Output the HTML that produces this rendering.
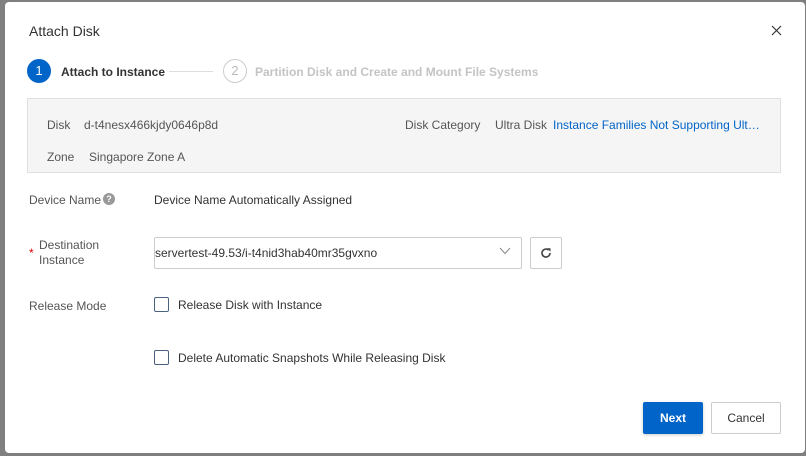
<!DOCTYPE html>
<html><head><style>
*{box-sizing:border-box;margin:0;padding:0}
body{width:806px;height:456px;background:#7f7f7f;font-family:"Liberation Sans",sans-serif;font-size:12px;color:#333;position:relative;overflow:hidden}
.bgl{position:absolute;left:0;top:0;width:6px;height:456px;background:#808080}
.dlg{position:absolute;left:5px;top:2px;width:800px;height:451px;background:#fff;border-radius:4px}
.a{position:absolute;white-space:nowrap}
.lbl{color:#555}
</style></head><body>
<div class="bgl"></div>
<div class="dlg">
<div class="a" style="left:24px;top:21px;font-size:14px;color:#333">Attach Disk</div>
<svg class="a" style="left:766px;top:23px" width="11" height="11" viewBox="0 0 11 11"><path d="M1 1L10 10M10 1L1 10" stroke="#333" stroke-width="1.2" fill="none"/></svg>
<div class="a" style="left:22px;top:57px;width:24px;height:24px;border-radius:50%;background:#0064c8;color:#fff;text-align:center;line-height:24px;font-size:13px">1</div>
<div class="a" style="left:56px;top:63px;font-weight:bold;font-size:12px;color:#333">Attach to Instance</div>
<div class="a" style="left:164px;top:69px;width:44px;height:1px;background:#ddd"></div>
<div class="a" style="left:218px;top:57px;width:24px;height:24px;border-radius:50%;border:1px solid #ccc;color:#bbb;text-align:center;line-height:22px;font-size:13px">2</div>
<div class="a" style="left:250px;top:63px;font-weight:bold;color:#c4c4c4">Partition Disk and Create and Mount File Systems</div>
<div class="a" style="left:22px;top:96px;width:754px;height:75px;background:#f5f5f5;border:1px solid #e0e0e0"></div>
<div class="a lbl" style="left:42px;top:116px">Disk</div>
<div class="a" style="left:79px;top:116px;color:#555">d-t4nesx466kjdy0646p8d</div>
<div class="a lbl" style="left:400px;top:116px">Disk Category</div>
<div class="a" style="left:490px;top:116px;color:#555">Ultra Disk</div>
<div class="a" style="left:548px;top:116px;color:#0064c8;width:210px;overflow:hidden;text-overflow:ellipsis">Instance Families Not Supporting Ultra Disks</div>
<div class="a lbl" style="left:42px;top:148px">Zone</div>
<div class="a" style="left:84px;top:148px;color:#555">Singapore Zone A</div>
<div class="a lbl" style="left:24px;top:191px">Device Name</div>
<div class="a" style="left:98px;top:191px;width:12px;height:12px;border-radius:50%;background:#999;color:#fff;font-size:9px;text-align:center;line-height:12px;font-weight:bold">?</div>
<div class="a" style="left:149px;top:191px;color:#333">Device Name Automatically Assigned</div>
<div class="a" style="left:24px;top:244px;color:#d00">*</div>
<div class="a lbl" style="left:34px;top:236px;line-height:15px">Destination<br>Instance</div>
<div class="a" style="left:149px;top:235px;width:368px;height:32px;border:1px solid #ccc;border-radius:2px"></div>
<div class="a" style="left:150px;top:244px;color:#333">servertest-49.53/i-t4nid3hab40mr35gvxno</div>
<svg class="a" style="left:494px;top:245px" width="12" height="8" viewBox="0 0 12 8"><path d="M1 1L6 6.5L11 1" stroke="#888" stroke-width="1" fill="none"/></svg>
<div class="a" style="left:525px;top:235px;width:32px;height:32px;border:1px solid #ccc;border-radius:2px"></div>
<svg class="a" style="left:535px;top:245px" width="12" height="12" viewBox="0 0 12 12"><path d="M10 6A4 4 0 1 1 8.6 3" stroke="#444" stroke-width="1.6" fill="none"/><path d="M7 1.2L10.5 1.2L10.5 4.7Z" fill="#444"/></svg>
<div class="a lbl" style="left:24px;top:297px">Release Mode</div>
<div class="a" style="left:149px;top:295px;width:15px;height:15px;border:1px solid #4a6280;border-radius:2px"></div>
<div class="a" style="left:173px;top:296px;color:#333">Release Disk with Instance</div>
<div class="a" style="left:149px;top:348px;width:15px;height:15px;border:1px solid #4a6280;border-radius:2px"></div>
<div class="a" style="left:173px;top:349px;color:#333">Delete Automatic Snapshots While Releasing Disk</div>
<div class="a" style="left:638px;top:400px;width:60px;height:32px;background:#0064c8;color:#fff;font-weight:bold;text-align:center;line-height:32px;border-radius:2px;box-shadow:0 1px 3px rgba(0,0,0,.2)">Next</div>
<div class="a" style="left:706px;top:400px;width:70px;height:32px;border:1px solid #ccc;color:#333;text-align:center;line-height:30px;border-radius:2px">Cancel</div>
</div>
</body></html>
